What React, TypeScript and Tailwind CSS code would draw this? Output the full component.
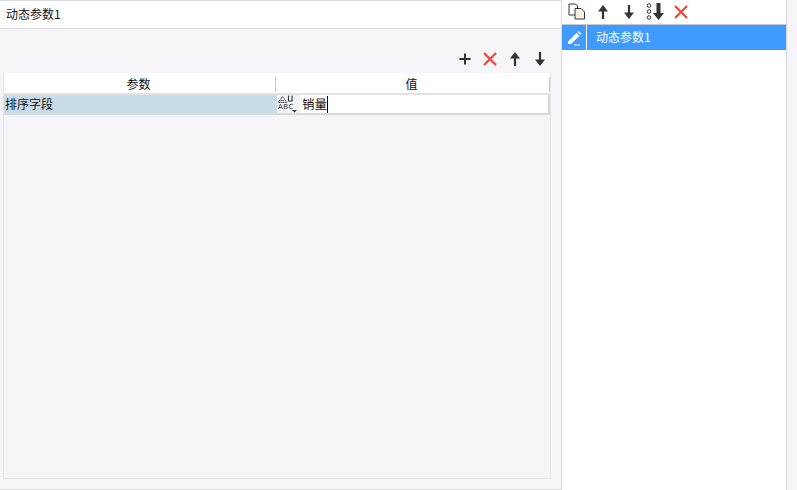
import React from 'react';

const font = { fontFamily: '"Noto Sans CJK SC", sans-serif' };

const Plus = () => (
  <svg width="12" height="12" viewBox="0 0 12 12"><path d="M6 0.5v11M0.5 6h11" stroke="#333" strokeWidth="2" fill="none" /></svg>
);
const Cross = ({ size = 14 }: { size?: number }) => (
  <svg width={size} height={size} viewBox="0 0 14 14"><path d="M1 1l12 12M13 1L1 13" stroke="#f04438" strokeWidth="2.2" fill="none" /></svg>
);
const Up = () => (
  <svg width="10" height="14" viewBox="0 0 10 14"><path d="M5 0L10 6.500H6.100V14H3.900V6.500H0z" fill="#333" /></svg>
);
const Down = () => (
  <svg width="10" height="14" viewBox="0 0 10 14"><path d="M5 14L0 7.500H3.900V0H6.100V7.500H10z" fill="#333" /></svg>
);

export default function App() {
  return (
    <div className="flex h-[490px] w-[797px] overflow-hidden bg-[#f5f5f8] text-[12px] text-[#111]" style={font}>
      {/* left editor */}
      <div className="flex w-[562px] shrink-0 flex-col border-r border-b border-t border-[#dcdce0]">
        <div className="flex h-[28px] shrink-0 items-center border-b border-[#dcdce0] bg-white pb-[2px] pl-[6px] leading-none">动态参数1</div>
        <div className="flex h-[44px] shrink-0 items-end justify-end pb-[7px] pr-[16px]">
          <div className="flex items-center gap-[12px]">
            <Plus />
            <span className="flex"><Cross /></span>
            <span className="mr-[3px] ml-[1px] flex"><Up /></span>
            <Down />
          </div>
        </div>
        <div className="ml-[3px] mr-[10px] flex h-[406px] flex-col border border-[#e6e6ea] border-t-0">
          <div className="flex h-[22px] shrink-0 items-center border-b-2 border-[#e2e2e2] bg-white pt-[2px]">
            <div className="flex h-[15px] w-[272px] items-center justify-center border-r border-[#c8c8c0] pr-[2px]">参数</div>
            <div className="flex h-[15px] flex-1 items-center justify-center border-r border-[#c8c8c0] pr-[2px]">值</div>
          </div>
          <div className="flex h-[20px] shrink-0 border-b-2 border-[#d9d9d9]">
            <div className="flex w-[273px] items-center bg-[#c8dbe9] pb-[1px] pl-[1px] text-[12px]">排序字段</div>
            <div className="flex flex-1 items-stretch bg-white">
              <div className="relative w-[23px] shrink-0 bg-[#f2f2f2]">
                <svg className="absolute left-0 top-0" width="23" height="18" viewBox="0 0 23 18">
                  <path d="M1 7.500l4.500-6 4.500 6zM3.500 5.500h4" fill="none" stroke="#444" strokeWidth="1" strokeDasharray="1.500 0.500" />
                  <path d="M11.500 0.500v5.500h3.500V0.500" fill="none" stroke="#333" strokeWidth="1.100" />
                  <path d="M15 15h5l-2.500 2.500z" fill="#333" />
                </svg>
                <span className="absolute left-[1px] top-[9px] text-[7px] leading-[7px] tracking-[0.500px] text-[#333]" style={{ fontFamily: '"DejaVu Sans", sans-serif' }}>ABC</span>
              </div>
              <div className="flex flex-1 items-center border-r-2 border-[#d9d9d9] pl-[2px] text-[12.500px]">
                销量<span className="h-[17px] w-px bg-black" />
              </div>
            </div>
          </div>
        </div>
      </div>

      {/* right list */}
      <div className="flex w-[225px] shrink-0 flex-col border-r border-[#d4d4da] bg-white">
        <div className="flex h-[24px] shrink-0 items-center pl-[6px] pb-[1px]">
          <svg width="18" height="17" viewBox="0 0 18 17">
            <path d="M1 1h6.500l2 2v9H1z" fill="#fff" stroke="#333" />
            <path d="M7 5.500h6l3.500 3.500v7H7z" fill="#fdf5e0" stroke="#333" />
          </svg>
          <span className="ml-[12px] flex"><Up /></span>
          <span className="ml-[16px] flex"><Down /></span>
          <span className="ml-[12px] flex items-center gap-[1px]">
            <svg width="6" height="17" viewBox="0 0 6 17"><circle cx="3" cy="2.500" r="1.800" fill="none" stroke="#333" /><circle cx="3" cy="8.500" r="1.800" fill="none" stroke="#333" /><circle cx="3" cy="14.500" r="1.800" fill="none" stroke="#333" /></svg>
            <svg width="11" height="17" viewBox="0 0 11 17"><path d="M5.500 17L0 10H3.500V0H7.500V10H11z" fill="#333" /></svg>
          </span>
          <span className="ml-[10px] flex"><Cross /></span>
        </div>
        <div className="flex h-[26px] shrink-0 border-t border-[#c8c8cc] bg-[#3f9bff] text-white">
          <div className="flex w-[25px] items-center justify-center border-r border-white">
            <svg width="16" height="16" viewBox="0 0 16 16">
              <path d="M2 11.500L10.500 3l3 2.800L5 14H2z M11.500 2l1-1 3 2.800-1 1z" fill="#fff" />
              <path d="M8 15h6" stroke="#fff" />
            </svg>
          </div>
          <div className="flex items-center pb-[2px] pl-[9px] leading-none">动态参数1</div>
        </div>
      </div>
    </div>
  );
}
